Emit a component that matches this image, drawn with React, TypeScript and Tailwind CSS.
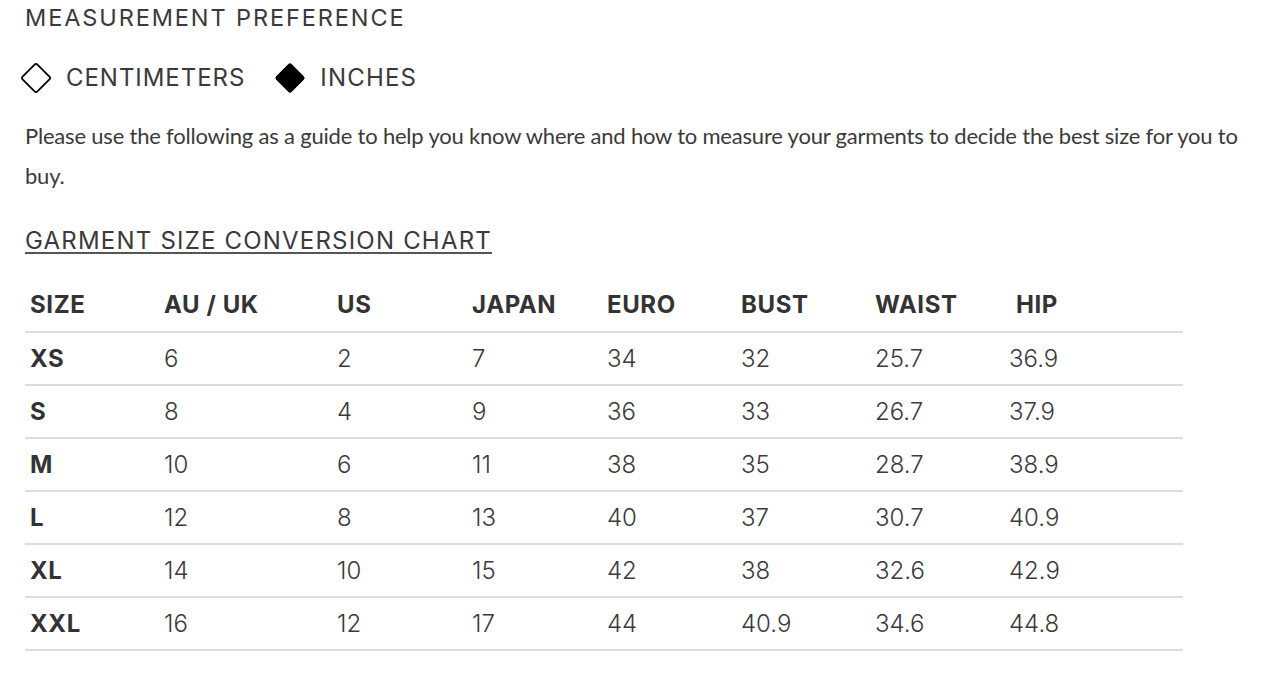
import React from "react";

const head = { fontFamily: "Inter, 'Liberation Sans', sans-serif" };
const body = { fontFamily: "Lato, 'Open Sans', sans-serif" };

const rows = [
  ["XS", "6", "2", "7", "34", "32", "25.7", "36.9"],
  ["S", "8", "4", "9", "36", "33", "26.7", "37.9"],
  ["M", "10", "6", "11", "38", "35", "28.7", "38.9"],
  ["L", "12", "8", "13", "40", "37", "30.7", "40.9"],
  ["XL", "14", "10", "15", "42", "38", "32.6", "42.9"],
  ["XXL", "16", "12", "17", "44", "40.9", "34.6", "44.8"],
];
const headers = ["SIZE", "AU / UK", "US", "JAPAN", "EURO", "BUST", "WAIST", "HIP"];
const widths = ["w-[134px]", "w-[173px]", "w-[135px]", "w-[135px]", "w-[134px]", "w-[134px]", "w-[134px]", "w-[179px]"];

function Diamond({ filled }: { filled?: boolean }) {
  return (
    <svg width="32" height="32" viewBox="0 0 32 32">
      <rect
        x="5.5"
        y="5.5"
        width="21"
        height="21"
        rx="2"
        transform="rotate(45 16 16)"
        fill={filled ? "#000" : "#fff"}
        stroke="#000"
        strokeWidth={filled ? 1 : 1.8}
      />
    </svg>
  );
}

export default function App() {
  return (
    <div className="min-h-[685px] bg-white pl-[25px] text-[#3a3a3a]">
      <h3 className="h-[36px] text-[23.5px] leading-[36px] tracking-[1.9px]" style={head}>
        MEASUREMENT PREFERENCE
      </h3>
      <div className="mt-[24px] flex h-[36px] items-center text-[24px]" style={head}>
        <div className="-ml-[5px] flex items-center">
          <Diamond />
          <span className="ml-[14px] tracking-[0.95px]">CENTIMETERS</span>
        </div>
        <div className="ml-[29px] flex items-center">
          <Diamond filled />
          <span className="ml-[14px] tracking-[1.2px]">INCHES</span>
        </div>
      </div>
      <p className="mt-[20px] w-[1232px] text-[22px] leading-[40px] tracking-[-0.2px]" style={body}>
        Please use the following as a guide to help you know where and how to measure your garments to decide the best size for you to buy.
      </p>
      <h4
        className="mt-[27px] h-[36px] text-[24px] leading-[36px] tracking-[1.2px] underline underline-offset-[3px] decoration-[1.5px] decoration-[#555]"
        style={head}
      >
        GARMENT SIZE CONVERSION CHART
      </h4>
      <table className="mt-[20px] w-[1158px] table-fixed border-collapse" style={head}>
        <thead>
          <tr className="h-[53px] border-b-2 border-[#dcdcdc]">
            {headers.map((h, i) => (
              <th
                key={h}
                className={`${widths[i]} ${i === 7 ? "pl-[12px]" : "pl-[5px]"} text-left align-middle text-[24px] font-bold tracking-[0.6px] text-[#333]`}
              >
                {h}
              </th>
            ))}
          </tr>
        </thead>
        <tbody>
          {rows.map((r) => (
            <tr key={r[0]} className="h-[53px] border-b-2 border-[#dcdcdc]">
              {r.map((c, i) => (
                <td
                  key={i}
                  className={`pl-[5px] align-middle text-[24px] ${i === 0 ? "font-bold tracking-[0.6px] text-[#333]" : "font-light text-[#3a3a3a]"}`}
                >
                  {c}
                </td>
              ))}
            </tr>
          ))}
        </tbody>
      </table>
    </div>
  );
}
